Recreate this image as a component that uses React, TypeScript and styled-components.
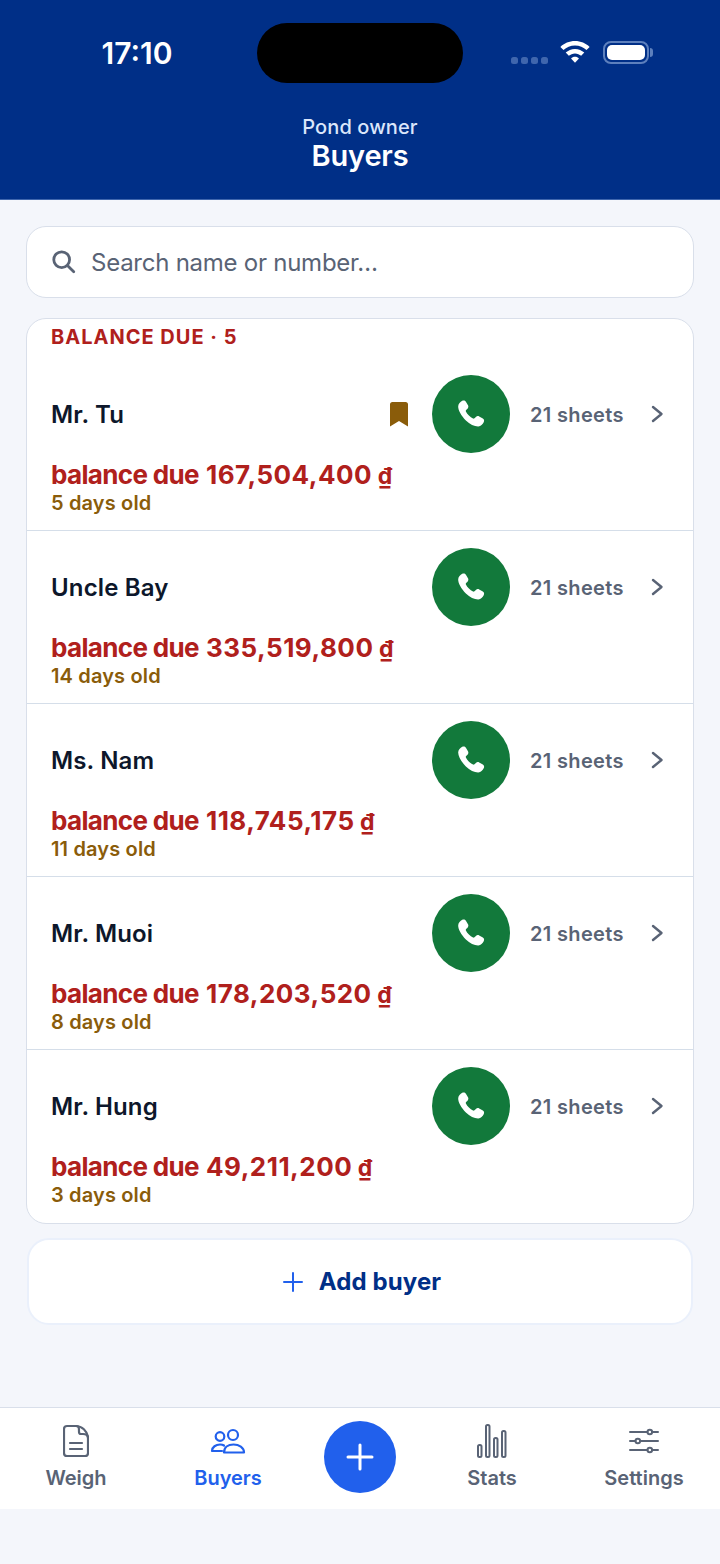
import { FC } from 'react';
import styled, { createGlobalStyle } from 'styled-components';

const Global = createGlobalStyle`
  html, body { margin: 0; padding: 0; background: #f4f6fb; }
  * { box-sizing: border-box; }
  body { font-family: Inter, "Noto Sans", "Liberation Sans", sans-serif; }
`;

const Page = styled.div`
  width: 720px;
  height: 1564px;
  background: #f4f6fb;
  display: flex;
  flex-direction: column;
`;

const Header = styled.header`
  height: 200px;
  background: #002f87;
  border-bottom: 1px solid #3f66ad;
  color: #fff;
  display: flex;
  flex-direction: column;
  align-items: center;
`;

const StatusBar = styled.div`
  width: 100%;
  padding-top: 23px;
  display: grid;
  grid-template-columns: 257px 206px 257px;
  height: 83px;
`;

const Time = styled.div`
  font-size: 30px;
  font-weight: 600;
  text-align: center;
  line-height: 60px;
  padding-left: 17px;
`;

const Island = styled.div`
  height: 60px;
  background: #000;
  border-radius: 30px;
`;

const StatusIcons = styled.div`
  display: flex;
  align-items: flex-start;
  padding: 18px 0 0 48px;
`;

const Dots = styled.div`
  display: flex;
  gap: 3px;
  margin-top: 16px;
  margin-right: 11px;
`;

const Dot = styled.span`
  width: 7px;
  height: 7px;
  border-radius: 2.5px;
  background: #3f66ad;
`;

const Battery = styled.div`
  margin-left: 12px;
  width: 46px;
  height: 23px;
  border: 2px solid #5d80bd;
  border-radius: 8px;
  padding: 2px;
  position: relative;
  &::before {
    content: '';
    display: block;
    width: 100%;
    height: 100%;
    background: #fff;
    border-radius: 5px;
  }
  &::after {
    content: '';
    position: absolute;
    right: -6px;
    top: 5px;
    width: 3px;
    height: 9px;
    border-radius: 0 3px 3px 0;
    background: #5d80bd;
  }
`;

const Role = styled.div`
  margin-top: 33px;
  font-size: 20px;
  line-height: 22px;
  font-weight: 500;
  letter-spacing: 0.1px;
  color: #dbe6fb;
`;

const Title = styled.h1`
  margin: 0;
  font-size: 29px;
  line-height: 36px;
  font-weight: 600;
  letter-spacing: -0.2px;
`;

const Main = styled.main`
  flex: 1;
  padding: 26px 26px 0;
  display: flex;
  flex-direction: column;
`;

const Search = styled.div`
  height: 72px;
  background: #fff;
  border: 1px solid #d9dfea;
  border-radius: 20px;
  display: flex;
  align-items: center;
  padding-left: 24px;
  gap: 14px;
  font-size: 24px;
  letter-spacing: -0.25px;
  color: #596375;
`;

const Card = styled.section`
  margin-top: 20px;
  background: #fff;
  border: 1px solid #d9dfea;
  border-radius: 20px;
  height: 906px;
  overflow: hidden;
`;

const SectionLabel = styled.div`
  height: 39px;
  padding: 5px 0 0 24px;
  font-size: 20px;
  line-height: 26px;
  font-weight: 700;
  letter-spacing: 1px;
  color: #b0201c;
`;

const Row = styled.div<{ $last?: boolean }>`
  height: 173px;
  padding: 17px 29px 0 24px;
  border-bottom: ${(p) => (p.$last ? 'none' : '1px solid #d5dee9')};
  display: flex;
  flex-direction: column;
`;

const TopLine = styled.div`
  display: flex;
  align-items: center;
  height: 78px;
`;

const Name = styled.div`
  flex: 1;
  font-size: 24px;
  font-weight: 600;
  letter-spacing: 0.15px;
  color: #0d172b;
`;

const Mark = styled.svg`
  margin-right: 24px;
`;

const CallButton = styled.button`
  width: 78px;
  height: 78px;
  border: none;
  padding: 0;
  border-radius: 50%;
  background: #12793b;
  display: flex;
  align-items: center;
  justify-content: center;
`;

const Sheets = styled.div`
  margin-left: 20px;
  padding-top: 1px;
  width: 93px;
  white-space: nowrap;
  font-size: 20px;
  font-weight: 600;
  letter-spacing: 0.35px;
  color: #596375;
`;

const Chevron = styled.svg`
  margin-left: 27px;
`;

const Balance = styled.div`
  margin-top: 7px;
  font-size: 26px;
  line-height: 30px;
  font-weight: 700;
  letter-spacing: -0.65px;
  color: #b0201c;
  white-space: nowrap;
`;

const Amount = styled.span`
  margin-left: 1.5px;
  letter-spacing: 0.5px;
`;

const Dong = styled.span`
  font-size: 23px;
  letter-spacing: 0;
`;

const Age = styled.div`
  margin-top: 1px;
  font-size: 20px;
  line-height: 22px;
  font-weight: 600;
  letter-spacing: 0.15px;
  color: #8a5c0a;
`;

const AddButton = styled.button`
  margin: 14px 1px 0;
  height: 87px;
  padding: 0 0 0 4px;
  background: #fff;
  border: 2px solid #eaf0fb;
  border-radius: 22px;
  display: flex;
  align-items: center;
  justify-content: center;
  gap: 16px;
  font-family: inherit;
  font-size: 24px;
  font-weight: 700;
  letter-spacing: 0.1px;
  color: #002f87;
`;

const TabBar = styled.nav`
  height: 102px;
  margin-bottom: 55px;
  background: #fff;
  border-top: 1px solid #d9dfea;
  display: grid;
  grid-template-columns: 152px 152px 1fr 152px 152px;
`;

const Tab = styled.div<{ $active?: boolean }>`
  display: flex;
  flex-direction: column;
  align-items: center;
  padding-top: 14px;
  font-size: 20px;
  line-height: 26px;
  font-weight: 600;
  color: ${(p) => (p.$active ? '#2160ec' : '#596375')};
  svg { height: 38px; margin-bottom: 5px; }
`;

const FabCell = styled.div`
  display: flex;
  justify-content: center;
  padding-top: 13px;
`;

const Fab = styled.button`
  width: 72px;
  height: 72px;
  border: none;
  padding: 0;
  border-radius: 50%;
  background: #2160ec;
  display: flex;
  align-items: center;
  justify-content: center;
`;

const buyers = [
  { name: 'Mr. Tu', amount: '167,504,400', age: '5 days old', marked: true },
  { name: 'Uncle Bay', amount: '335,519,800', age: '14 days old' },
  { name: 'Ms. Nam', amount: '118,745,175', age: '11 days old' },
  { name: 'Mr. Muoi', amount: '178,203,520', age: '8 days old' },
  { name: 'Mr. Hung', amount: '49,211,200', age: '3 days old' },
];

const PhoneIcon = () => (
  <svg width="33" height="33" viewBox="0 0 30 30" fill="#fff">
    <path d="M6.6 2.6c1.2-.7 2.6-.4 3.3.8l1.900 3.300c.6 1 .4 2.200-.4 3l-1.300 1.200c-.4.4-.4.9-.2 1.300 1.400 2.700 3.800 5.100 6.500 6.500.4.200.9.200 1.300-.2l1.300-1.300c.8-.8 2-1 3-.4l3.300 1.900c1.200.7 1.500 2.100.8 3.300-1 1.800-2.600 3.700-4.900 3.800-3.300.1-7.700-1.800-11.300-5.400C5.700 16.200 2.700 11 2.900 7.500 3 5.200 4.800 3.600 6.600 2.600z" />
  </svg>
);

const WifiIcon = () => (
  <svg width="32" height="23" viewBox="0 0 33 25">
    <path d="M16.500 0C10.300 0 4.700 2.500.6 6.400l3.400 3.500c3.200-3.100 7.600-5 12.500-5s9.300 1.900 12.500 5l3.400-3.500C28.300 2.500 22.700 0 16.500 0z" fill="#fff" />
    <path d="M16.500 8.600c-3.900 0-7.500 1.600-10.100 4l3.400 3.500c1.800-1.600 4.100-2.600 6.700-2.600s4.900 1 6.700 2.600l3.400-3.500c-2.600-2.400-6.200-4-10.100-4z" fill="#fff" />
    <path d="M16.500 17.200c-1.700 0-3.200.6-4.300 1.700l4.300 4.800 4.300-4.800c-1.100-1.100-2.600-1.700-4.300-1.700z" fill="#fff" />
  </svg>
);

const App: FC = () => {
  return (
    <Page>
      <Global />
      <Header>
        <StatusBar>
          <Time>17:10</Time>
          <Island />
          <StatusIcons>
            <Dots>
              <Dot />
              <Dot />
              <Dot />
              <Dot />
            </Dots>
            <WifiIcon />
            <Battery />
          </StatusIcons>
        </StatusBar>
        <Role>Pond owner</Role>
        <Title>Buyers</Title>
      </Header>
      <Main>
        <Search>
          <svg width="26" height="26" viewBox="0 0 28 28" fill="none" stroke="#596375" strokeWidth="3" strokeLinecap="round">
            <circle cx="11.500" cy="11.500" r="8.500" />
            <path d="M18 18l6.500 6.500" />
          </svg>
          Search name or number…
        </Search>
        <Card>
          <SectionLabel>BALANCE DUE · 5</SectionLabel>
          {buyers.map((b, i) => (
            <Row key={b.name} $last={i === buyers.length - 1}>
              <TopLine>
                <Name>{b.name}</Name>
                {b.marked && (
                  <Mark width="18" height="25" viewBox="0 0 18 25" fill="#8a5c0a">
                    <path d="M2.500 0h13A2.500 2.500 0 0 1 18 2.500V24.500L9 19 0 24.500V2.500A2.500 2.500 0 0 1 2.500 0z" />
                  </Mark>
                )}
                <CallButton>
                  <PhoneIcon />
                </CallButton>
                <Sheets>21 sheets</Sheets>
                <Chevron width="14" height="20" viewBox="0 0 14 20" fill="none" stroke="#596375" strokeWidth="2.400" strokeLinecap="round" strokeLinejoin="round">
                  <path d="M3 3l8.500 7L3 17" />
                </Chevron>
              </TopLine>
              <Balance>
                balance due <Amount>{b.amount}</Amount> <Dong>₫</Dong>
              </Balance>
              <Age>{b.age}</Age>
            </Row>
          ))}
        </Card>
        <AddButton>
          <svg width="20" height="20" viewBox="0 0 20 20" stroke="#2160ec" strokeWidth="2" strokeLinecap="round">
            <path d="M10 1v18M1 10h18" />
          </svg>
          Add buyer
        </AddButton>
      </Main>
      <TabBar>
        <Tab>
          <svg width="26" height="38" viewBox="0 0 26 38" fill="none" stroke="#596375" strokeWidth="2.200" strokeLinecap="round" strokeLinejoin="round">
            <path d="M4 4h9c6 0 11 5 12 11v16a3 3 0 0 1-3 3H4a3 3 0 0 1-3-3V7a3 3 0 0 1 3-3z" />
            <path d="M13 4c3 0 3 2 3 5v1a2 2 0 0 0 2 2h2c3 0 5 1 5 4" />
            <path d="M7 21h12M7 27h12" />
          </svg>
          Weigh
        </Tab>
        <Tab $active>
          <svg width="36" height="38" viewBox="0 0 36 38" fill="none" stroke="#2160ec" strokeWidth="2.200" strokeLinecap="round" strokeLinejoin="round">
            <circle cx="10" cy="14.500" r="4.300" />
            <circle cx="23" cy="13" r="5" />
            <path d="M12 29H2c0-4 4-6.500 8-6.500 1.500 0 3 .3 4 1" />
            <path d="M14 30.500c0-5 4-8 9.500-8s10.500 3 10.500 8z" />
          </svg>
          Buyers
        </Tab>
        <FabCell>
          <Fab>
            <svg width="30" height="30" viewBox="0 0 30 30" stroke="#fff" strokeWidth="3" strokeLinecap="round">
              <path d="M15 3v24M3 15h24" />
            </svg>
          </Fab>
        </FabCell>
        <Tab>
          <svg width="30" height="38" viewBox="0 0 30 38" fill="none" stroke="#596375" strokeWidth="2">
            <rect x="1" y="23" width="3.500" height="12" rx="1.500" />
            <rect x="9" y="3" width="3.500" height="32" rx="1.500" />
            <rect x="17" y="16" width="3.500" height="19" rx="1.500" />
            <rect x="25" y="9" width="3.500" height="26" rx="1.500" />
          </svg>
          Stats
        </Tab>
        <Tab>
          <svg width="30" height="38" viewBox="0 0 30 38" fill="none" stroke="#596375" strokeWidth="2" strokeLinecap="round">
            <path d="M1 10h17.500M23 10h6M1 19h5.500M11 19h18M1 28h17.500M23 28h6" />
            <circle cx="20.800" cy="10" r="2.300" />
            <circle cx="8.800" cy="19" r="2.300" />
            <circle cx="20.800" cy="28" r="2.300" />
          </svg>
          Settings
        </Tab>
      </TabBar>
    </Page>
  );
};

export default App;
